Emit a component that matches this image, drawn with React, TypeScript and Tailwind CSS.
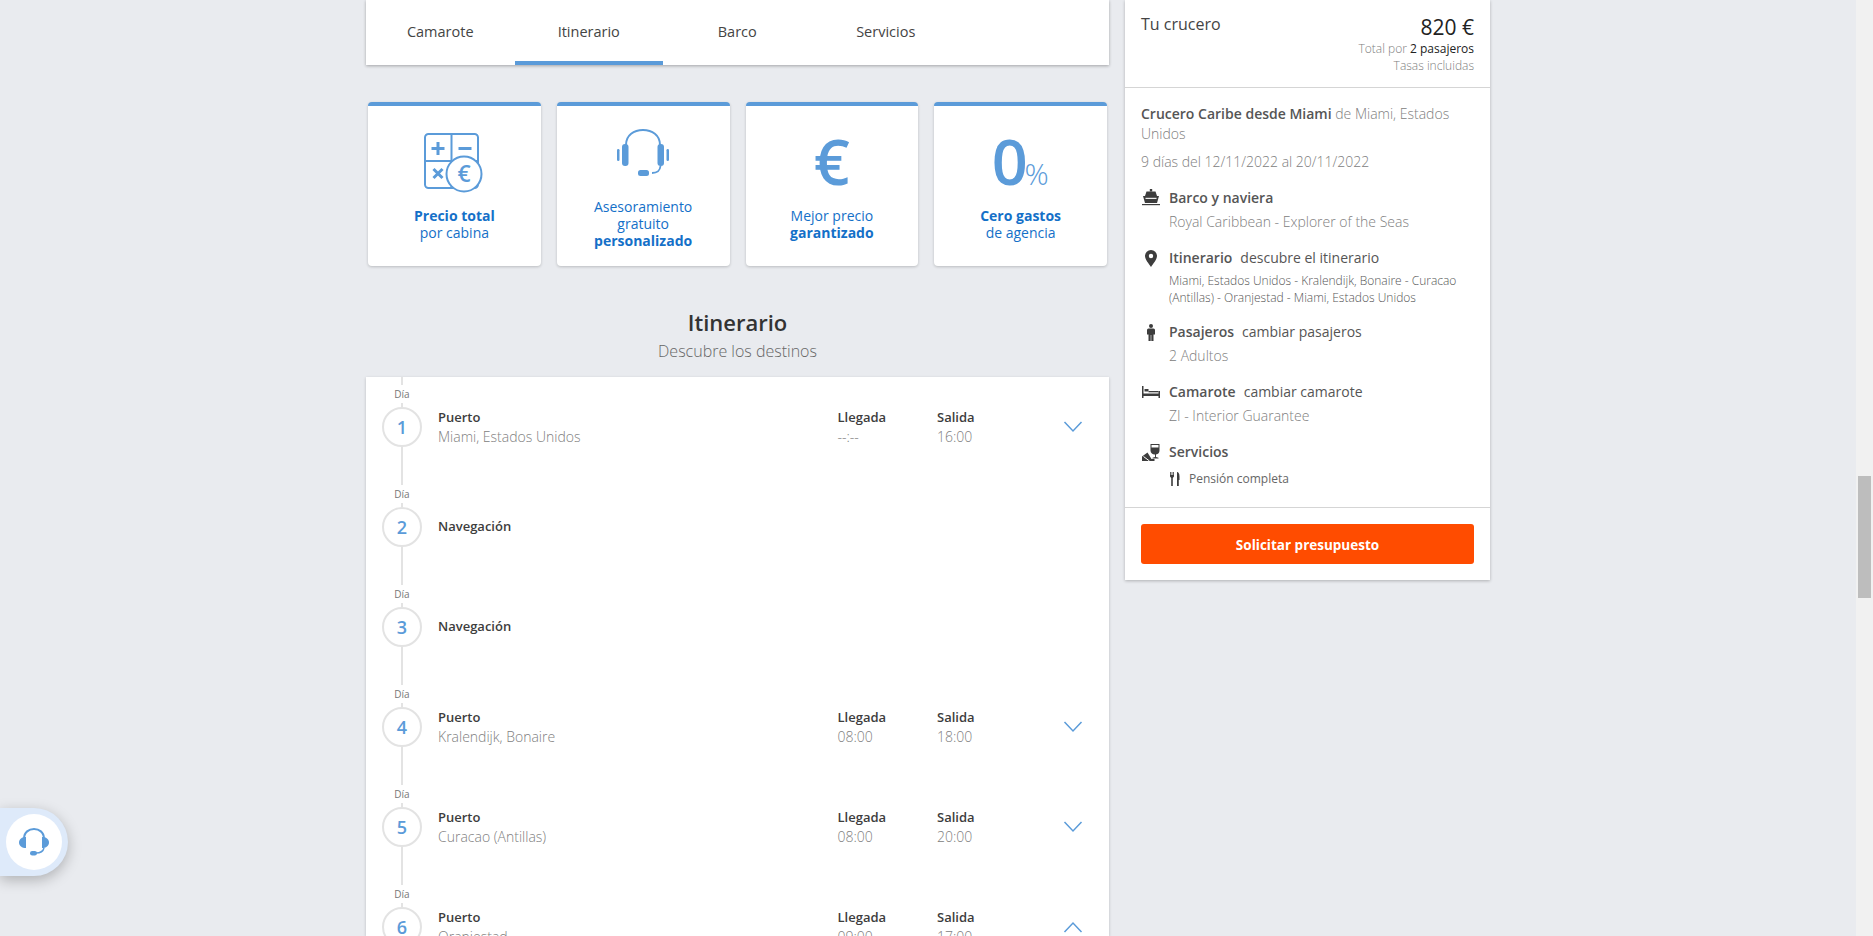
import React from "react";

const font = { fontFamily: '"Open Sans", sans-serif' };

function Chevron({ up }: { up?: boolean }) {
  return (
    <svg width="20" height="12" viewBox="0 0 20 12" fill="none" stroke="#5b9bd9" strokeWidth="1.5">
      {up ? <path d="M1.500 11L10 2l8.500 9" /> : <path d="M1.500 1L10 10l8.500-9" />}
    </svg>
  );
}

function Headset() {
  return (
    <svg width="52" height="48" viewBox="0 0 52 48" fill="none">
      <path d="M9 16C9 6 17 1 26 1s17 5 17 15" stroke="#5b9bd9" strokeWidth="2" />
      <rect x="5" y="15" width="6.500" height="22" rx="3" fill="#5b9bd9" />
      <rect x="40.500" y="15" width="6.500" height="22" rx="3" fill="#5b9bd9" />
      <rect x="0" y="20" width="2.500" height="12" rx="1.200" fill="#5b9bd9" />
      <rect x="49.500" y="20" width="2.500" height="12" rx="1.200" fill="#5b9bd9" />
      <rect x="21" y="41" width="11" height="6" rx="2.500" fill="#5b9bd9" />
      <path d="M35 44c5 0 8-2 8.500-7" stroke="#5b9bd9" strokeWidth="1.800" />
    </svg>
  );
}

function SolidHeadset() {
  return (
    <svg width="30" height="28" viewBox="0 0 30 28" fill="none">
      <path d="M5 11C5 4 10 1 15 1s10 3 10 10" stroke="#5b9bd9" strokeWidth="2" />
      <path d="M7 9v11C3 20 0 18 0 14.500S3 9 7 9z" fill="#5b9bd9" />
      <path d="M23 9v11c4 0 7-2 7-5.500S27 9 23 9z" fill="#5b9bd9" />
      <rect x="11" y="23" width="7" height="4.500" rx="2.200" fill="#5b9bd9" />
      <path d="M17 25c4 0 7-1 8-5" stroke="#5b9bd9" strokeWidth="1.500" />
    </svg>
  );
}

function Calculator() {
  return (
    <svg width="60" height="60" viewBox="0 0 60 60" fill="none">
      <rect x="1" y="1" width="53" height="54" rx="3.500" stroke="#5b9bd9" strokeWidth="2" />
      <path d="M27.500 1v27M1 28h53M27.500 28v27" stroke="#5b9bd9" strokeWidth="2" />
      <path d="M14 9v13M7.500 15.500h13" stroke="#5b9bd9" strokeWidth="3" />
      <path d="M34.500 15.500h13" stroke="#5b9bd9" strokeWidth="3" />
      <path d="M9.500 36l9 9M18.500 36l-9 9" stroke="#5b9bd9" strokeWidth="3" />
      <circle cx="40" cy="41" r="17.500" fill="#fff" stroke="#5b9bd9" strokeWidth="2" />
      <text x="40" y="49" textAnchor="middle" fontSize="23" fontWeight="600" fill="#5b9bd9" style={font}>€</text>
    </svg>
  );
}

function ShipIcon() {
  return (
    <svg width="18" height="18" viewBox="0 0 18 18" fill="#3d3d3d">
      <path d="M7.800 0h2.400v2.500H7.800z" />
      <path d="M4.500 2.500h9L15 7H3z" />
      <path d="M1 7h16l-2 7H3z" />
      <path d="M3.500 8.800h11v1.100h-11z" fill="#fff" />
      <path d="M0 15h18v1.200H0z" />
    </svg>
  );
}
function PinIcon() {
  return (
    <svg width="12" height="17" viewBox="0 0 12 17" fill="#3d3d3d">
      <path fillRule="evenodd" d="M6 0a6 6 0 0 1 6 6c0 3.500-4 8-6 11C4 14 0 9.500 0 6a6 6 0 0 1 6-6zm0 3.800a2.200 2.200 0 1 0 0 4.400 2.200 2.200 0 0 0 0-4.400z" />
    </svg>
  );
}
function PersonIcon() {
  return (
    <svg width="8" height="17" viewBox="0 0 8 17" fill="#3d3d3d">
      <circle cx="4" cy="2" r="2" />
      <path d="M1.500 4.500h5A1.500 1.500 0 0 1 8 6v4.500H6.500V17H4.300v-6h-.6v6H1.500v-6.500H0V6a1.500 1.500 0 0 1 1.500-1.500z" />
    </svg>
  );
}
function BedIcon() {
  return (
    <svg width="18" height="12" viewBox="0 0 18 12" fill="#3d3d3d">
      <path d="M0 0h1.500v7.500h15V5H18v7h-1.500v-2h-15v2H0z" />
      <path d="M2.500 3h4v2.500h-4z" />
      <path d="M6.500 5h10v1.300h-10z" />
    </svg>
  );
}
function WineIcon() {
  return (
    <svg width="18" height="17" viewBox="0 0 18 17" fill="#3d3d3d">
      <path d="M8.500 0h9v6.500a4 4 0 0 1-3.500 3.900V13l2.500.8v.7H10.500v-.7l2.500-.8v-2.600A4 4 0 0 1 8.500 6.500z" />
      <path d="M9.500 1h7v2.500h-7z" fill="#fff" />
      <path d="M0 12.500l5.500-4 4 6.500h3v2H0z" />
      <path d="M1.500 12.500l6 4.500" stroke="#fff" strokeWidth="1" />
    </svg>
  );
}
function ForkIcon() {
  return (
    <svg width="10" height="14" viewBox="0 0 10 14" fill="#3d3d3d">
      <path d="M0 0h.8v3h.8V0h.8v3h.8V0H4v4.500L2.800 6v8H1.200V6L0 4.500z" />
      <path d="M7 0c1.500 0 2.500 1.500 2.500 4.500V8H8.800v6H7z" />
    </svg>
  );
}

const days = [
  { n: 1, port: "Miami, Estados Unidos", a: "--:--", s: "16:00" },
  { n: 2 },
  { n: 3 },
  { n: 4, port: "Kralendijk, Bonaire", a: "08:00", s: "18:00" },
  { n: 5, port: "Curacao (Antillas)", a: "08:00", s: "20:00" },
  { n: 6, port: "Oranjestad", a: "09:00", s: "17:00", open: true },
];

function DayRow({ d }: { d: (typeof days)[number] }) {
  return (
    <div className="flex h-[100px] shrink-0 pl-4">
      <div className="flex w-10 shrink-0 flex-col items-center">
        <div className="h-2 w-0.5 bg-[#e3e3e3]" />
        <div className="flex h-[18px] items-center text-[10px] text-[#777]">Día</div>
        <div className="h-1 w-0.5 bg-[#e3e3e3]" />
        <div className="flex h-10 w-10 shrink-0 items-center justify-center rounded-full border-2 border-[#e3e3e3] text-[18px] font-semibold text-[#5b9bd9]">
          {d.n}
        </div>
        <div className="w-0.5 flex-1 bg-[#e3e3e3]" />
      </div>
      {d.port ? (
        <div className="ml-4 mt-[30px] flex h-10 flex-1 text-[13px] leading-5">
          <div className="flex-1">
            <div className="font-semibold text-[#3d3d3d]">Puerto</div>
            <div className="text-[14px] font-light text-[#808080]">{d.port}</div>
          </div>
          <div className="w-[99.500px]">
            <div className="font-semibold text-[#3d3d3d]">Llegada</div>
            <div className="text-[14px] font-light text-[#808080]">{d.a}</div>
          </div>
          <div className="w-[118px]">
            <div className="font-semibold text-[#3d3d3d]">Salida</div>
            <div className="text-[14px] font-light text-[#808080]">{d.s}</div>
          </div>
          <div className="flex w-[36px] items-center justify-center">
            <Chevron up={d.open} />
          </div>
          <div className="w-[18px]" />
        </div>
      ) : (
        <div className="ml-4 mt-[30px] flex h-10 items-center text-[13px] font-semibold text-[#3d3d3d]">Navegación</div>
      )}
    </div>
  );
}

function Perk({ icon, children }: { icon: React.ReactNode; children: React.ReactNode }) {
  return (
    <div className="flex h-[164px] flex-1 flex-col rounded border-t-4 border-[#5b9bd9] bg-white shadow-[0_1px_3px_rgba(0,0,0,0.2)]">
      <div className="flex h-[90px] items-center justify-center">{icon}</div>
      <div className="flex h-[55px] flex-col items-center justify-center text-center text-[14px] leading-[17px] text-[#1470c8]">
        {children}
      </div>
    </div>
  );
}

function Info({
  icon,
  title,
  link,
  children,
}: {
  icon: React.ReactNode;
  title: string;
  link?: string;
  children: React.ReactNode;
}) {
  return (
    <div className="mt-4 flex">
      <div className="flex h-5 w-7 shrink-0 items-center justify-center pr-2">{icon}</div>
      <div className="min-w-0 flex-1">
        <div className="text-[14px] leading-5 text-[#555]">
          <span className="font-semibold">{title}</span>
          {link && <span className="ml-2">{link}</span>}
        </div>
        {children}
      </div>
    </div>
  );
}

export default function App() {
  return (
    <div className="relative flex h-[936px] w-full overflow-hidden bg-[#e9ebef]" style={font}>
      <div className="ml-[366px] flex w-[743px] shrink-0 flex-col">
        <div className="flex h-[65px] shrink-0 bg-white shadow-[0_1px_3px_rgba(0,0,0,0.3)]">
          {["Camarote", "Itinerario", "Barco", "Servicios"].map((t, i) => (
            <div
              key={t}
              className={
                i === 1
                  ? "flex w-[148.500px] items-center justify-center border-b-4 border-[#5b9bd9] pt-0.5 text-[14.500px] text-[#444]"
                  : "flex w-[148.500px] items-center justify-center border-b-4 border-transparent pt-0.5 text-[14.500px] text-[#444]"
              }
            >
              {t}
            </div>
          ))}
        </div>

        <div className="mt-[37px] flex gap-4 px-0.5">
          <Perk icon={<div className="pt-6"><Calculator /></div>}>
            <span className="font-bold">Precio total</span>
            <span>por cabina</span>
          </Perk>
          <Perk icon={<div className="pt-1"><Headset /></div>}>
            <span>Asesoramiento</span>
            <span>gratuito</span>
            <span className="font-bold">personalizado</span>
          </Perk>
          <Perk icon={<span className="pt-[18px] text-[63px] leading-none font-semibold text-[#5b9bd9]">€</span>}>
            <span>Mejor precio</span>
            <span className="font-bold">garantizado</span>
          </Perk>
          <Perk
            icon={
              <span className="pt-[18px] pr-1 text-[63px] leading-none font-semibold tracking-tighter text-[#5b9bd9]">
                0<span className="text-[30px] font-light">%</span>
              </span>
            }
          >
            <span className="font-bold">Cero gastos</span>
            <span>de agencia</span>
          </Perk>
        </div>

        <div className="mt-[41px] text-center text-[22px] leading-[30px] font-semibold text-[#333]">Itinerario</div>
        <div className="mt-[2px] text-center text-[16px] leading-[24px] font-light text-[#666]">Descubre los destinos</div>

        <div className="mt-[14px] flex flex-1 flex-col overflow-hidden bg-white shadow-[0_1px_3px_rgba(0,0,0,0.2)]">
          {days.map((d) => (
            <DayRow key={d.n} d={d} />
          ))}
        </div>
      </div>

      <div className="ml-4 w-[365px] shrink-0 self-start bg-white shadow-[0_1px_3px_rgba(0,0,0,0.25)]">
        <div className="flex h-[88px] justify-between border-b border-[#d5d5d5] px-4">
          <div className="pt-[13px] text-[16px] leading-[22px] text-[#444]">Tu crucero</div>
          <div className="pt-[13px] text-right">
            <div className="text-[21px] leading-7 text-[#222]">820 €</div>
            <div className="-mt-px text-[12px] leading-[17px] font-light text-[#808080]">
              Total por <span className="font-normal text-[#222]">2 pasajeros</span>
            </div>
            <div className="text-[12px] leading-[17px] font-light text-[#808080]">Tasas incluidas</div>
          </div>
        </div>
        <div className="h-[420px] border-b border-[#d5d5d5] px-4 pt-4">
          <div className="text-[14px] leading-5 font-light text-[#808080]">
            <span className="font-semibold text-[#555]">Crucero Caribe desde Miami</span> de Miami, Estados Unidos
          </div>
          <div className="mt-2 text-[14px] leading-5 font-light text-[#808080]">9 días del 12/11/2022 al 20/11/2022</div>
          <Info icon={<ShipIcon />} title="Barco y naviera">
            <div className="mt-1 text-[14px] leading-5 font-light text-[#808080]">Royal Caribbean - Explorer of the Seas</div>
          </Info>
          <Info icon={<PinIcon />} title="Itinerario" link="descubre el itinerario">
            <div className="mt-1 text-[12px] leading-[17px] font-light text-[#555]">
              Miami, Estados Unidos - Kralendijk, Bonaire - Curacao (Antillas) - Oranjestad - Miami, Estados Unidos
            </div>
          </Info>
          <Info icon={<PersonIcon />} title="Pasajeros" link="cambiar pasajeros">
            <div className="mt-1 text-[14px] leading-5 font-light text-[#808080]">2 Adultos</div>
          </Info>
          <Info icon={<BedIcon />} title="Camarote" link="cambiar camarote">
            <div className="mt-1 text-[14px] leading-5 font-light text-[#808080]">ZI - Interior Guarantee</div>
          </Info>
          <Info icon={<WineIcon />} title="Servicios">
            <div className="mt-[10px] flex items-center text-[12px] leading-[14px] font-normal text-[#666]">
              <span className="flex w-5 shrink-0 pl-px">
                <ForkIcon />
              </span>
              Pensión completa
            </div>
          </Info>
        </div>
        <div className="px-4 py-4">
          <div className="flex h-10 items-center justify-center rounded-[3px] bg-[#ff4c00] pt-0.5 text-[13.500px] font-bold text-white">
            Solicitar presupuesto
          </div>
        </div>
      </div>

      <div className="ml-auto w-[17px] shrink-0 bg-[#f1f1f1] pl-0.5 pr-0.5 pt-[476px]">
        <div className="h-[122px] w-[13px] bg-[#bdbdbd]" />
      </div>

      <div className="absolute left-0 top-[808px] flex h-[68px] w-[68px] items-center rounded-r-full bg-[#deeafa] shadow-[0_4px_14px_rgba(0,0,0,0.25)]">
        <div className="ml-1.5 flex h-14 w-14 items-center justify-center rounded-full bg-white">
          <SolidHeadset />
        </div>
      </div>
    </div>
  );
}
